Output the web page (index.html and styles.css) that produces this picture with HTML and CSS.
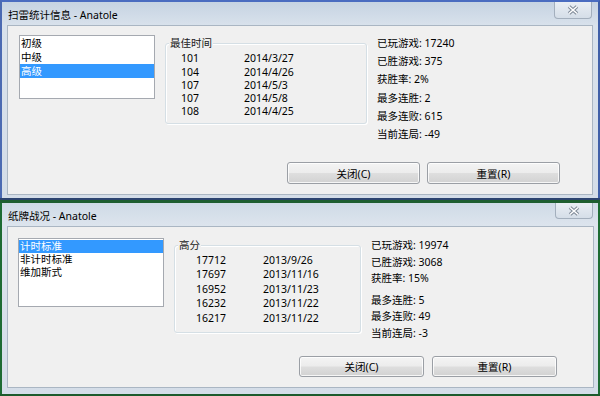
FILE: index.html
```html
<!DOCTYPE html>
<html lang="zh-CN">
<head>
<meta charset="utf-8">
<title>统计信息</title>
<link rel="stylesheet" href="styles.css">
</head>
<body>
<div class="desk">
  <div class="win w1">
    <div class="titlebar">
      <span class="title">扫雷统计信息 - Anatole</span>
      <div class="close">
        <svg width="12" height="10" viewBox="0 0 12 10"><path d="M2 1.5 L10 8.5 M10 1.5 L2 8.5" stroke="#7d8896" stroke-width="3.6" fill="none"/><path d="M2 1.5 L10 8.5 M10 1.5 L2 8.5" stroke="#ffffff" stroke-width="1.6" fill="none"/></svg>
      </div>
    </div>
    <div class="client">
      <div class="toprow">
        <ul class="listbox lb1">
          <li>初级</li>
          <li>中级</li>
          <li class="sel">高级</li>
        </ul>
        <fieldset class="group g1">
          <legend>最佳时间</legend>
          <div class="rows">
            <div class="row"><span class="c1">101</span><span>2014/3/27</span></div>
            <div class="row"><span class="c1">104</span><span>2014/4/26</span></div>
            <div class="row"><span class="c1">107</span><span>2014/5/3</span></div>
            <div class="row"><span class="c1">107</span><span>2014/5/8</span></div>
            <div class="row"><span class="c1">108</span><span>2014/4/25</span></div>
          </div>
        </fieldset>
        <div class="stats s1">
          <div>已玩游戏: 17240</div>
          <div>已胜游戏: 375</div>
          <div>获胜率: 2%</div>
          <div>最多连胜: 2</div>
          <div>最多连败: 615</div>
          <div>当前连局: -49</div>
        </div>
      </div>
      <div class="btnrow">
        <div class="btn">关闭(C)</div>
        <div class="btn">重置(R)</div>
      </div>
    </div>
  </div>
  <div class="gap"></div>
  <div class="win w2">
    <div class="titlebar">
      <span class="title">纸牌战况 - Anatole</span>
      <div class="close">
        <svg width="12" height="10" viewBox="0 0 12 10"><path d="M2 1.5 L10 8.5 M10 1.5 L2 8.5" stroke="#7d8896" stroke-width="3.6" fill="none"/><path d="M2 1.5 L10 8.5 M10 1.5 L2 8.5" stroke="#ffffff" stroke-width="1.6" fill="none"/></svg>
      </div>
    </div>
    <div class="client">
      <div class="toprow">
        <ul class="listbox lb2">
          <li class="sel">计时标准</li>
          <li>非计时标准</li>
          <li>维加斯式</li>
        </ul>
        <fieldset class="group g2">
          <legend>高分</legend>
          <div class="rows">
            <div class="row"><span class="c1">17712</span><span>2013/9/26</span></div>
            <div class="row"><span class="c1">17697</span><span>2013/11/16</span></div>
            <div class="row"><span class="c1">16952</span><span>2013/11/23</span></div>
            <div class="row"><span class="c1">16232</span><span>2013/11/22</span></div>
            <div class="row"><span class="c1">16217</span><span>2013/11/22</span></div>
          </div>
        </fieldset>
        <div class="stats s2">
          <div>已玩游戏: 19974</div>
          <div>已胜游戏: 3068</div>
          <div>获胜率: 15%</div>
          <div class="brk">最多连胜: 5</div>
          <div>最多连败: 49</div>
          <div>当前连局: -3</div>
        </div>
      </div>
      <div class="btnrow">
        <div class="btn">关闭(C)</div>
        <div class="btn">重置(R)</div>
      </div>
    </div>
  </div>
</div>
</body>
</html>
```
FILE: styles.css
```css
* { box-sizing: border-box; }
html, body { margin: 0; padding: 0; }
body {
  width: 600px;
  height: 396px;
  overflow: hidden;
  background: #1c5a2c;
  font-family: "Noto Sans", "Noto Sans CJK SC", sans-serif;
  font-size: 10.5px;
  color: #000;
}
.desk { display: flex; flex-direction: column; }

.win { display: flex; flex-direction: column; }
.w1 {
  height: 198px;
  background: linear-gradient(to bottom, #c6d3e2 0, #d9e2ec 24px, #d4dde8 100%);
  border-top: 2px solid #4a6cc0;
  border-left: 2px solid #4b6ab2;
  border-right: 2px solid #3f5fa8;
  padding: 0 5px 3px 5px;
}
.w2 {
  height: 191px;
  background: linear-gradient(to bottom, #cfdae6 0, #dce4ed 22px, #d4dde8 100%);
  border-left: 2px solid #1d6b33;
  border-right: 2px solid #1d6b33;
  padding: 0 4px 6px 5px;
}
.gap {
  height: 5px;
  background: linear-gradient(to bottom, #2d4470 0, #2d4470 2px, #1e5e30 2px);
}

.titlebar { display: flex; align-items: flex-start; }
.w1 .titlebar { height: 23px; }
.w2 .titlebar { height: 23px; }
.title { margin-left: 1px; line-height: 16px; white-space: nowrap; }
.w1 .title { margin-top: 5px; }
.w2 .title { margin-top: 5px; }

.close {
  margin-left: auto;
  margin-right: 1px;
  width: 38px;
  border: 1px solid #a3afbd;
  border-top: none;
  border-radius: 0 0 4px 4px;
  background: linear-gradient(to bottom, #e9eef4, #d5dee8);
  display: flex;
  align-items: center;
  justify-content: center;
}
.w1 .close { height: 17px; }
.w2 .close { height: 16px; }

.client {
  flex: 1;
  background: #f0f0f0;
  border: 1px solid #aab6c3;
  display: flex;
  flex-direction: column;
}

.toprow { display: flex; align-items: flex-start; }

.listbox {
  list-style: none;
  margin: 0;
  padding: 0;
  background: #fff;
  border: 1px solid #a5a9b0;
}
.listbox li { padding-left: 1px; white-space: nowrap; }
.listbox li.sel { background: #3399ff; color: #fff; }
.lb1 { margin: 9px 0 0 11px; width: 136px; height: 64px; }
.lb1 li { line-height: 14px; }
.lb2 { margin: 11px 0 0 10px; width: 146px; height: 69px; padding-top: 0.5px; }
.lb2 li { line-height: 13px; }

.group {
  margin: 0;
  padding: 0;
  min-width: 0;
  border: 1px solid #d5dfe5;
  border-radius: 3px;
  box-shadow: inset 1px 1px 0 #fff, 1px 1px 0 #fff;
}
.group legend {
  padding: 0 1px;
  margin-left: 3px;
  line-height: 14px;
  background: #f0f0f0;
  color: #1a1a1a;
}
.g1 { margin: 10px 0 0 10px; width: 202px; height: 88px; }
.g2 { margin: 11px 0 0 10px; width: 187px; height: 95px; }
.g1 .rows { padding: 2.4px 0 0 15px; }
.g1 .row { line-height: 13.25px; }
.g1 .c1 { width: 63px; }
.g2 .rows { padding: 0.75px 0 0 21px; }
.g2 .row { line-height: 14.5px; }
.g2 .c1 { width: 67px; }
.row { display: flex; white-space: nowrap; }
.c1 { flex: none; }

.stats { white-space: nowrap; }
.s1 { margin: 8px 0 0 10px; line-height: 18.2px; }
.s2 { margin: 10px 0 0 10px; line-height: 16.5px; }
.s2 .brk { margin-top: 5px; }

.btnrow {
  margin-top: auto;
  display: flex;
  justify-content: flex-end;
}
.w1 .btnrow { padding: 0 32px 10px 0; gap: 7px; }
.w2 .btnrow { padding: 0 36px 10px 0; gap: 8px; }

.btn {
  border: 1px solid #9b9fa5;
  border-radius: 3px;
  background: linear-gradient(to bottom, #f4f4f4 0%, #ececec 48%, #dedede 52%, #d2d2d2 100%);
  box-shadow: inset 0 0 0 1px rgba(255,255,255,0.8);
  display: flex;
  align-items: center;
  justify-content: center;
  white-space: nowrap;
}
.w1 .btn { width: 133px; height: 22px; }
.w2 .btn { width: 125px; height: 21px; }
```
